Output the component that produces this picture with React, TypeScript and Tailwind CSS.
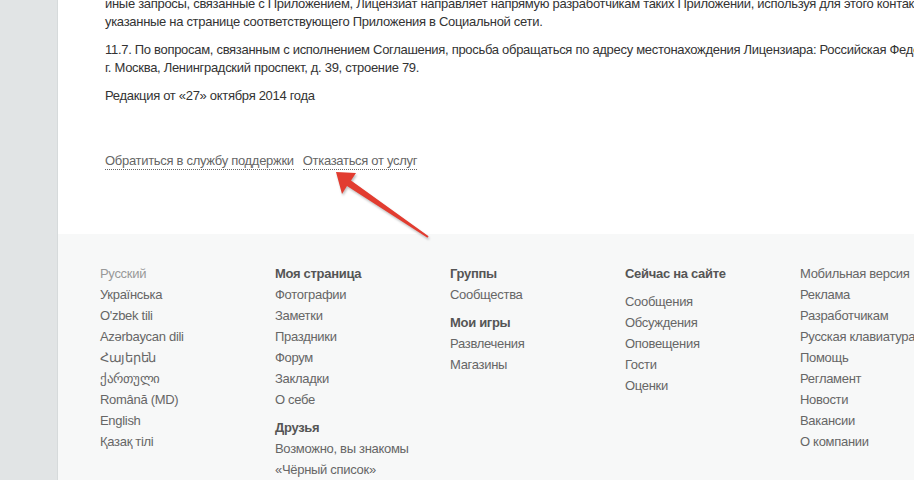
const LANGS = ["Українська", "O'zbek tili", "Azərbaycan dili", "Հայերեն", "ქართული", "Română (MD)", "English", "Қазақ тілі"];

const COL_PAGE = ["Фотографии", "Заметки", "Праздники", "Форум", "Закладки", "О себе"];
const COL_FRIENDS = ["Возможно, вы знакомы", "«Чёрный список»"];
const COL_ONLINE = ["Сообщения", "Обсуждения", "Оповещения", "Гости", "Оценки"];
const COL_MISC = ["Мобильная версия", "Реклама", "Разработчикам", "Русская клавиатура", "Помощь", "Регламент", "Новости", "Вакансии", "О компании"];

const Link = ({ children }: { children: React.ReactNode }) => (
    <a className="block h-[21px] leading-[21px] text-[#666] whitespace-nowrap cursor-pointer">{children}</a>
);

const Heading = ({ children }: { children: React.ReactNode }) => (
    <div className="h-[21px] leading-[21px] font-bold text-[#555] whitespace-nowrap">{children}</div>
);

export default function App() {
    return (
        <div
            className="relative flex h-[480px] w-[914px] overflow-hidden bg-white text-[13px] tracking-[-0.3px] text-[#333]"
            style={{ fontFamily: '"Liberation Sans", Arial, sans-serif' }}
        >
            {/* left rail */}
            <div className="w-[58px] shrink-0 border-r border-[#d6dadb] bg-[#e1e4e5]" />

            <div className="flex min-w-0 flex-1 flex-col">
                {/* agreement text */}
                <div className="h-[234px] pl-[47px] leading-[18px]">
                    <div className="-mt-[5px] whitespace-nowrap">
                        <p>иные запросы, связанные с Приложением, Лицензиат направляет напрямую разработчикам таких Приложений, используя для этого контактные данные,</p>
                        <p>указанные на странице соответствующего Приложения в Социальной сети.</p>
                    </div>
                    <div className="mt-[10px] whitespace-nowrap">
                        <p>11.7. По вопросам, связанным с исполнением Соглашения, просьба обращаться по адресу местонахождения Лицензиара: Российская Федерация,</p>
                        <p>г. Москва, Ленинградский проспект, д. 39, строение 79.</p>
                    </div>
                    <p className="mt-[10px]">Редакция от «27» октября 2014 года</p>

                    <div className="mt-[48px] flex gap-[9px] text-[#666]">
                        <a className="border-b border-dotted border-[#666] leading-[16px] cursor-pointer">Обратиться в службу поддержки</a>
                        <a className="border-b border-dotted border-[#666] leading-[16px] cursor-pointer">Отказаться от услуг</a>
                    </div>
                </div>

                {/* footer */}
                <div className="flex flex-1 bg-[#f7f8f8] pl-[42px] pt-[29px]">
                    <div className="w-[175px] shrink-0">
                        <div className="h-[21px] leading-[21px] text-[#999]">Русский</div>
                        {LANGS.map((l) => (
                            <Link key={l}>{l}</Link>
                        ))}
                    </div>

                    <div className="w-[175px] shrink-0">
                        <Heading>Моя страница</Heading>
                        {COL_PAGE.map((l) => (
                            <Link key={l}>{l}</Link>
                        ))}
                        <div className="mt-[7px]">
                            <Heading>Друзья</Heading>
                        </div>
                        {COL_FRIENDS.map((l) => (
                            <Link key={l}>{l}</Link>
                        ))}
                    </div>

                    <div className="w-[175px] shrink-0">
                        <Heading>Группы</Heading>
                        <Link>Сообщества</Link>
                        <div className="mt-[7px]">
                            <Heading>Мои игры</Heading>
                        </div>
                        <Link>Развлечения</Link>
                        <Link>Магазины</Link>
                    </div>

                    <div className="w-[175px] shrink-0">
                        <Heading>Сейчас на сайте</Heading>
                        <div className="mt-[7px]">
                            {COL_ONLINE.map((l) => (
                                <Link key={l}>{l}</Link>
                            ))}
                        </div>
                    </div>

                    <div className="w-[175px] shrink-0">
                        {COL_MISC.map((l) => (
                            <Link key={l}>{l}</Link>
                        ))}
                    </div>
                </div>
            </div>

            {/* red annotation arrow */}
            <svg
                className="pointer-events-none absolute left-0 top-0 drop-shadow-[1px_2px_1px_rgba(0,0,0,0.25)]"
                width="914"
                height="480"
                viewBox="0 0 914 480"
            >
                <polygon
                    points="336,172 356,173 351,180.5 428.6,236.2 427.4,237.8 347,186 342,194"
                    fill="#e23c30"
                />
            </svg>
        </div>
    );
}
